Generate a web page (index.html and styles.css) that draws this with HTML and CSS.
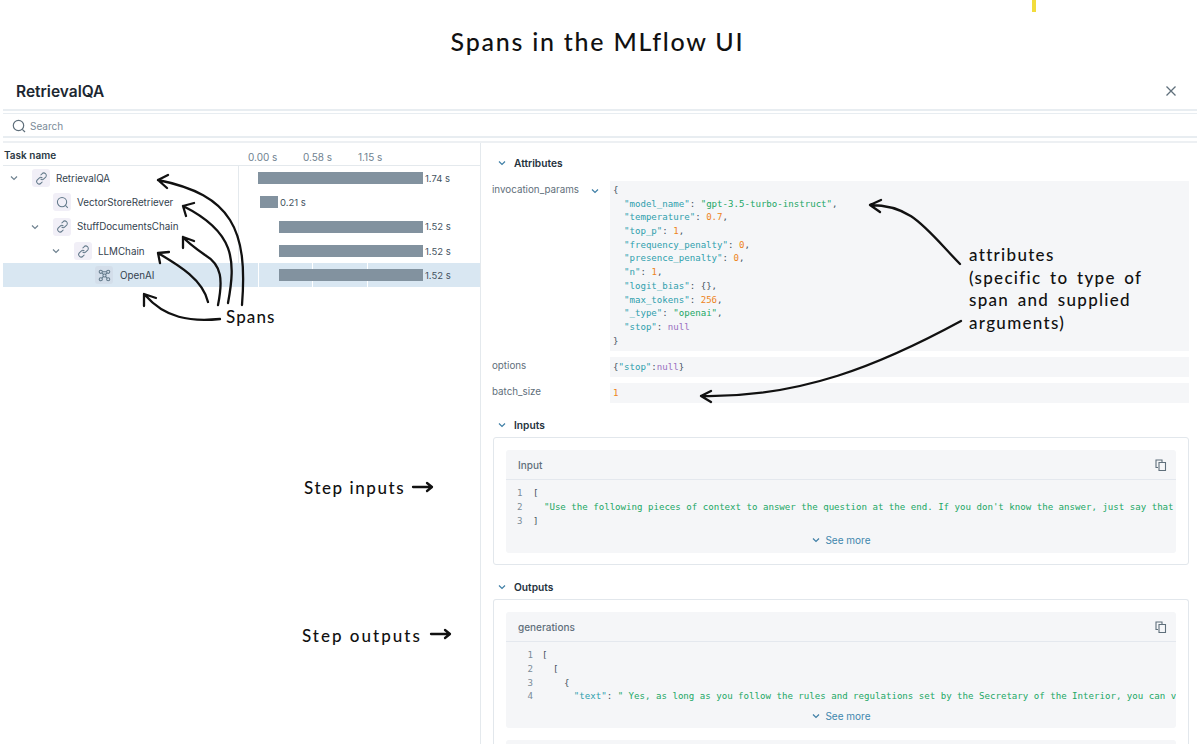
FILE: index.html
```html
<!DOCTYPE html>
<html lang="en">
    <head>
        <meta charset="UTF-8">
        <meta name="viewport" content="width=device-width, initial-scale=1.0">
        <title>Spans in the MLflow UI</title>
        <link rel="stylesheet" href="styles.css">
    </head>
    <body>
        <h1 class="page-title">Spans in the MLflow UI</h1>

        <div class="drawer">
            <div class="drawer-head">
                <h2>RetrievalQA</h2>
                <svg class="close-icon" width="12" height="12" viewBox="0 0 12 12"><path d="M1.5 1.5l9 9M10.500 1.500l-9 9"/></svg>
            </div>
            <div class="search-row">
                <svg class="search-icon" width="14" height="14" viewBox="0 0 14 14"><circle cx="6.500" cy="6.500" r="5.200"/><path d="M10.300 10.300l2.700 2.700"/></svg>
                <span>Search</span>
            </div>

            <div class="panes">
                <div class="tree-pane">
                    <div class="tree-head">
                        <div class="task-name">Task name</div>
                        <div class="ticks"><span>0.00 s</span><span>0.58 s</span><span>1.15 s</span></div>
                    </div>

                    <div class="tree-row">
                        <div class="name-cell">
                            <svg class="chev" viewBox="0 0 10 10"><path d="M2 3.500l3 3 3-3"/></svg>
                            <span class="span-icon"><svg viewBox="0 0 14 14"><path d="M6 3.500l1.500-1.500a2.500 2.500 0 0 1 4 3.500l-2 2a2.500 2.500 0 0 1-3.500 0M8 10.500l-1.500 1.500a2.500 2.500 0 0 1-4-3.500l2-2a2.500 2.500 0 0 1 3.500 0"/></svg></span>
                            <span class="span-name">RetrievalQA</span>
                        </div>
                        <div class="time-cell"><span class="bar" style="margin-left:19px;width:165px"></span><span class="dur">1.74 s</span></div>
                    </div>
                    <div class="tree-row">
                        <div class="name-cell lvl-1">
                            <span class="chev-gap"></span>
                            <span class="span-icon"><svg viewBox="0 0 14 14"><circle cx="6.500" cy="6.500" r="5"/><path d="M10.200 10.200l2.500 2.500"/></svg></span>
                            <span class="span-name">VectorStoreRetriever</span>
                        </div>
                        <div class="time-cell"><span class="bar" style="margin-left:21px;width:18px"></span><span class="dur">0.21 s</span></div>
                    </div>
                    <div class="tree-row">
                        <div class="name-cell lvl-1">
                            <svg class="chev" viewBox="0 0 10 10"><path d="M2 3.500l3 3 3-3"/></svg>
                            <span class="span-icon"><svg viewBox="0 0 14 14"><path d="M6 3.500l1.500-1.500a2.500 2.500 0 0 1 4 3.500l-2 2a2.500 2.500 0 0 1-3.500 0M8 10.500l-1.500 1.500a2.500 2.500 0 0 1-4-3.500l2-2a2.500 2.500 0 0 1 3.500 0"/></svg></span>
                            <span class="span-name">StuffDocumentsChain</span>
                        </div>
                        <div class="time-cell"><span class="bar" style="margin-left:40px;width:144px"></span><span class="dur">1.52 s</span></div>
                    </div>
                    <div class="tree-row">
                        <div class="name-cell lvl-2">
                            <svg class="chev" viewBox="0 0 10 10"><path d="M2 3.500l3 3 3-3"/></svg>
                            <span class="span-icon"><svg viewBox="0 0 14 14"><path d="M6 3.500l1.500-1.500a2.500 2.500 0 0 1 4 3.500l-2 2a2.500 2.500 0 0 1-3.500 0M8 10.500l-1.500 1.500a2.500 2.500 0 0 1-4-3.500l2-2a2.500 2.500 0 0 1 3.500 0"/></svg></span>
                            <span class="span-name">LLMChain</span>
                        </div>
                        <div class="time-cell"><span class="bar" style="margin-left:40px;width:144px"></span><span class="dur">1.52 s</span></div>
                    </div>
                    <div class="tree-row selected">
                        <div class="name-cell lvl-3">
                            <span class="chev-gap"></span>
                            <span class="span-icon"><svg viewBox="0 0 14 14"><circle cx="3" cy="3" r="1.700"/><circle cx="11" cy="3" r="1.700"/><circle cx="7" cy="7" r="1.700"/><circle cx="3" cy="11" r="1.700"/><circle cx="11" cy="11" r="1.700"/><path d="M4.700 3h4.600M4.200 4.200l1.600 1.600M9.800 4.200l-1.600 1.600M4.200 9.800l1.600-1.600M9.800 9.800l-1.600-1.600"/></svg></span>
                            <span class="span-name">OpenAI</span>
                        </div>
                        <div class="time-cell"><span class="bar" style="margin-left:40px;width:144px"></span><span class="dur">1.52 s</span></div>
                    </div>
                </div>

                <div class="detail-pane">
                    <div class="section-head first">
                        <svg class="chev blue" viewBox="0 0 10 10"><path d="M2 3.500l3 3 3-3"/></svg>
                        <span>Attributes</span>
                    </div>
                    <div class="attr-row">
                        <div class="attr-key">invocation_params<svg class="chev blue" viewBox="0 0 10 10"><path d="M2 3.500l3 3 3-3"/></svg></div>
                        <div class="attr-val tall">
                            <div class="row">{</div>
                            <div class="row in"><span class="k">"model_name"</span>: <span class="s">"gpt-3.5-turbo-instruct"</span>,</div>
                            <div class="row in"><span class="k">"temperature"</span>: <span class="n">0.7</span>,</div>
                            <div class="row in"><span class="k">"top_p"</span>: <span class="n">1</span>,</div>
                            <div class="row in"><span class="k">"frequency_penalty"</span>: <span class="n">0</span>,</div>
                            <div class="row in"><span class="k">"presence_penalty"</span>: <span class="n">0</span>,</div>
                            <div class="row in"><span class="k">"n"</span>: <span class="n">1</span>,</div>
                            <div class="row in"><span class="k">"logit_bias"</span>: {},</div>
                            <div class="row in"><span class="k">"max_tokens"</span>: <span class="n">256</span>,</div>
                            <div class="row in"><span class="k">"_type"</span>: <span class="s">"openai"</span>,</div>
                            <div class="row in"><span class="k">"stop"</span>: <span class="u">null</span></div>
                            <div class="row">}</div>
                        </div>
                    </div>
                    <div class="attr-row">
                        <div class="attr-key">options</div>
                        <div class="attr-val"><div class="row">{<span class="k">"stop"</span>:<span class="u">null</span>}</div></div>
                    </div>
                    <div class="attr-row">
                        <div class="attr-key">batch_size</div>
                        <div class="attr-val"><div class="row"><span class="n">1</span></div></div>
                    </div>

                    <div class="section-head">
                        <svg class="chev blue" viewBox="0 0 10 10"><path d="M2 3.500l3 3 3-3"/></svg>
                        <span>Inputs</span>
                    </div>
                    <div class="card">
                        <div class="code-box">
                            <div class="code-head">
                                <span>Input</span>
                                <svg class="copy-icon" width="12" height="12" viewBox="0 0 12 12"><path d="M3 8.500H1V1h6v2"/><path d="M4 3.500h6.500v8H4z"/></svg>
                            </div>
                            <div class="code-lines">
                                <div class="line"><span class="ln">1</span><span>[</span></div>
                                <div class="line"><span class="ln">2</span><span class="s">  "Use the following pieces of context to answer the question at the end. If you don't know the answer, just say that</span></div>
                                <div class="line"><span class="ln">3</span><span>]</span></div>
                            </div>
                            <div class="see-more"><svg class="chev blue" viewBox="0 0 10 10"><path d="M2 3.500l3 3 3-3"/></svg>See more</div>
                        </div>
                    </div>

                    <div class="section-head">
                        <svg class="chev blue" viewBox="0 0 10 10"><path d="M2 3.500l3 3 3-3"/></svg>
                        <span>Outputs</span>
                    </div>
                    <div class="card open-bottom">
                        <div class="code-box">
                            <div class="code-head">
                                <span>generations</span>
                                <svg class="copy-icon" width="12" height="12" viewBox="0 0 12 12"><path d="M3 8.500H1V1h6v2"/><path d="M4 3.500h6.500v8H4z"/></svg>
                            </div>
                            <div class="code-lines wide-nums">
                                <div class="line"><span class="ln">1</span><span>[</span></div>
                                <div class="line"><span class="ln">2</span><span>  [</span></div>
                                <div class="line"><span class="ln">3</span><span>    {</span></div>
                                <div class="line"><span class="ln">4</span><span class="text-row">      <span class="k">"text"</span>: <span class="s">" Yes, as long as you follow the rules and regulations set by the Secretary of the Interior, you can v</span></span></div>
                            </div>
                            <div class="see-more"><svg class="chev blue" viewBox="0 0 10 10"><path d="M2 3.500l3 3 3-3"/></svg>See more</div>
                        </div>
                        <div class="code-box next"></div>
                    </div>
                </div>
            </div>
        </div>

        <!-- Hand drawn notes on top of the screenshot -->
        <div class="marker"></div>
        <svg class="scribbles" width="1200" height="744" viewBox="0 0 1200 744">
            <path d="M220 319C190 322 165 318 145 295M144 306L144 294L156 298"/>
            <path d="M208 302C203 280 180 266 158 253M160 263L158 253L169 252"/>
            <path d="M218 305C223 280 222 265 205 255C195 248 188 243 183 237M183 248L183 237L194 241"/>
            <path d="M228 303C236 260 235 232 183 206M186 216L183 206L194 203"/>
            <path d="M242 305C248 230 232 195 158 180M167 188L158 180L168 175"/>
            <path d="M960 264C925 228 912 205 870 205M880 212L870 205L881 200"/>
            <path d="M961 321C880 365 800 398 701 396M711 402L701 396L711 391"/>
            <path d="M413 487H432M427 483L432 487L427 491"/>
            <path d="M431 634H450M445 630L450 634L445 638"/>
        </svg>
        <div class="note note-spans">Spans</div>
        <div class="note note-inputs">Step inputs</div>
        <div class="note note-outputs">Step outputs</div>
        <div class="note note-attrs">attributes<br>(specific to type of<br>span and supplied<br>arguments)</div>
    </body>
</html>
```

FILE: styles.css
```css
* {
    box-sizing: border-box;
}
html, body {
    height: 744px;
    overflow: hidden;
}
body {
    margin: 0;
    background: #fff;
    font-family: Inter, "Liberation Sans", sans-serif;
    color: #1f2c37;
    position: relative;
}

/* Title */
.page-title {
    margin: 0;
    height: 80px;
    padding: 23px 5px 0 0;
    text-align: center;
    font: 500 25px/36px Lato, sans-serif;
    letter-spacing: 1.75px;
    color: #111;
}

/* Drawer */
.drawer {
    margin: 0 3px;
}
.drawer-head {
    height: 31px;
    padding: 0 20px 7px 13px;
    display: flex;
    justify-content: space-between;
    align-items: center;
    border-bottom: 2px solid #e8edf1;
}
.drawer-head h2 {
    margin: 0;
    font-size: 15.5px;
    font-weight: 600;
    color: #1c2731;
}
.close-icon path {
    fill: none;
    stroke: #5f6f7b;
    stroke-width: 1.3;
}
.search-row {
    height: 25px;
    margin-top: 2px;
    padding: 1px 0 0 9px;
    display: flex;
    align-items: center;
    gap: 4px;
    font-size: 10px;
    color: #7b8c99;
    border-top: 1px solid #e8edf1;
    border-bottom: 2px solid #e8edf1;
}
.search-icon * {
    fill: none;
    stroke: #5f6f7b;
    stroke-width: 1.2;
}
.panes {
    display: flex;
    margin-top: 3px;
    height: 603px;
    border-top: 2px solid #edf0f3;
}

/* Left tree */
.tree-pane {
    width: 477px;
    flex: none;
}
.tree-head {
    height: 23px;
    display: flex;
    border-bottom: 1px solid #e4e9ed;
}
.task-name {
    width: 245px;
    padding: 6px 0 0 1px;
    font-size: 10px;
    font-weight: 600;
    color: #2a3843;
}
.ticks {
    display: flex;
    padding-top: 8px;
    font-size: 10px;
    color: #6f8290;
}
.ticks span {
    width: 55px;
}
.tree-row {
    height: 24.300px;
    display: flex;
    align-items: center;
}
.tree-row.selected {
    background: #d9e7f2;
}
.name-cell {
    width: 236px;
    height: 100%;
    flex: none;
    display: flex;
    align-items: center;
    padding-left: 6px;
    border-right: 1px solid #e4e9ed;
}
.selected .name-cell {
    border-right: 0;
}
.lvl-1 { padding-left: 27px; }
.lvl-2 { padding-left: 48px; }
.lvl-3 { padding-left: 69px; }
.chev {
    width: 10px;
    height: 10px;
    flex: none;
}
.chev path {
    fill: none;
    stroke: #6f8290;
    stroke-width: 1.2;
}
.chev.blue path {
    stroke: #3f7fa6;
}
.chev-gap {
    width: 10px;
    flex: none;
}
.span-icon {
    width: 18px;
    height: 18px;
    margin: 0 6px 0 13px;
    flex: none;
    display: flex;
    align-items: center;
    justify-content: center;
    background: #f1eff7;
    border-radius: 3px;
}
.selected .span-icon {
    background: #d3deea;
}
.lvl-3 .span-name {
    margin-left: 1px;
}
.span-icon svg {
    width: 13px;
    height: 13px;
}
.span-icon svg * {
    fill: none;
    stroke: #62798a;
    stroke-width: 1.100;
}
.span-name {
    font-size: 9.800px;
    color: #33424e;
    white-space: nowrap;
}
.time-cell {
    display: flex;
    align-items: center;
    height: 100%;
    flex: 1;
}
.selected .time-cell {
    background-image: linear-gradient(#fff, #fff), linear-gradient(#fff, #fff), linear-gradient(#fff, #fff);
    background-size: 1px 100%;
    background-repeat: no-repeat;
    background-position: 19px 0, 73px 0, 128px 0;
}
.bar {
    height: 12px;
    background: #82929f;
}
.dur {
    margin-left: 2px;
    font-size: 9.500px;
    color: #44535f;
}

/* Right details */
.detail-pane {
    flex: 1;
    padding: 0 8px 0 11px;
    border-left: 1px solid #e4e9ed;
    overflow: hidden;
}
.section-head {
    height: 16px;
    margin-top: 14px;
    display: flex;
    align-items: center;
    gap: 7px;
    padding-left: 5px;
    font-size: 10.200px;
    font-weight: 600;
    color: #25323d;
}
.section-head.first {
    margin-top: 12px;
}
.attr-row {
    display: flex;
    margin-bottom: 6px;
}
.section-head.first + .attr-row {
    margin-top: 10px;
}
.attr-key {
    width: 118px;
    flex: none;
    display: flex;
    justify-content: space-between;
    padding: 2px 10px 0 0;
    font-size: 9.800px;
    line-height: 14px;
    color: #5f6f7b;
}
.attr-key .chev {
    margin-top: 3px;
}
.attr-val {
    flex: 1;
    height: 20px;
    padding: 4px 3px 0;
    background: #f5f6f8;
    font: 9.100px/13.700px "DejaVu Sans Mono", monospace;
    color: #44535f;
}
.attr-val.tall {
    height: 170px;
    padding-top: 3px;
}
.row {
    height: 13.700px;
    white-space: pre;
}
.row.in {
    padding-left: 11px;
}
.k { color: #2f9fad; }
.s { color: #22a765; }
.n { color: #ee8421; }
.u { color: #9a6fc0; }

/* Code cards */
.section-head + .card {
    margin-top: 4px;
}
.card {
    height: 128px;
    margin-left: 1px;
    padding: 12px;
    border: 1.500px solid #e2e7ec;
    border-radius: 3px;
}
.card.open-bottom {
    height: 170px;
    border-bottom: 0;
}
.code-box {
    height: 103px;
    background: #f5f6f8;
    border-radius: 3px;
    overflow: hidden;
}
.open-bottom .code-box {
    height: 116px;
}
.open-bottom .code-box.next {
    height: 10px;
    margin-top: 12px;
}
.code-head {
    height: 30px;
    padding: 1px 9px 0 12px;
    display: flex;
    justify-content: space-between;
    align-items: center;
    border-bottom: 1.500px solid #e4e8ee;
    font-size: 10px;
    font-weight: 500;
    color: #5f6f7b;
}
.copy-icon path {
    fill: none;
    stroke: #5f6f7b;
    stroke-width: 1.100;
}
.code-lines {
    padding: 7px 0 0 11px;
    font: 9.100px/13.800px "DejaVu Sans Mono", monospace;
    color: #44535f;
}
.line {
    display: flex;
    white-space: pre;
}
.ln {
    width: 16px;
    flex: none;
    color: #7b8c99;
}
.wide-nums .ln {
    width: 25px;
    text-align: right;
    padding-right: 9px;
}
.text-row {
    margin-left: -1px;
}
.see-more {
    margin-top: 6px;
    display: flex;
    justify-content: center;
    align-items: center;
    gap: 4px;
    font-size: 10px;
    color: #3f86ad;
}
.open-bottom .see-more {
    margin-top: 6px;
}

/* Notes */
.marker {
    position: absolute;
    left: 1032px;
    top: 0;
    width: 4px;
    height: 12px;
    background: #f2dc3c;
}
.scribbles {
    position: absolute;
    left: 0;
    top: 0;
}
.scribbles path {
    fill: none;
    stroke: #111;
    stroke-width: 2.300;
    stroke-linecap: round;
    stroke-linejoin: round;
}
.note {
    position: absolute;
    font: 500 17px/22.500px Lato, sans-serif;
    letter-spacing: 1.100px;
    color: #111;
    white-space: nowrap;
}
.note-spans { left: 226px; top: 306px; }
.note-inputs { left: 304px; top: 477px; letter-spacing: 1.550px; }
.note-outputs { left: 302px; top: 625px; letter-spacing: 2px; }
.note-attrs { left: 969px; top: 244px; letter-spacing: 1.300px; word-spacing: 3px; }
```
